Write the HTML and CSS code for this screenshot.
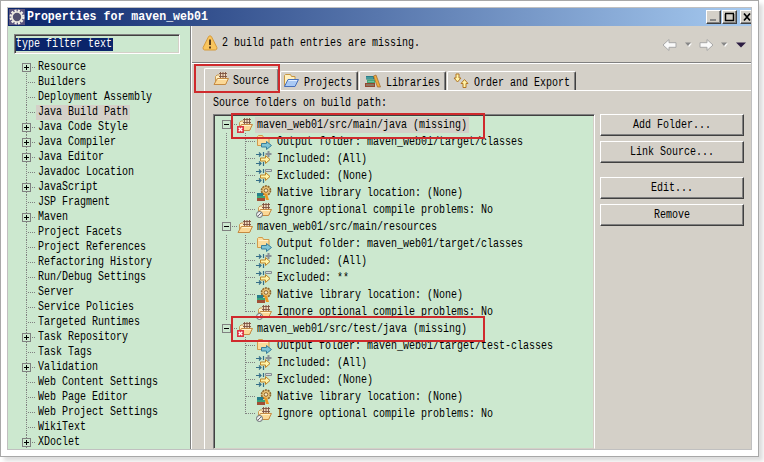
FILE: index.html
```html
<!DOCTYPE html>
<html lang="en">
<head>
<meta charset="utf-8">
<title>Properties for maven_web01</title>
<link rel="stylesheet" href="styles.css">
</head>
<body>
<svg class="defs" aria-hidden="true">
  <symbol id="pkg" viewBox="0 0 16 16">
    <path d="M2.500 13V5.500L4 4h3l1 1.500h5V13z" fill="#fff0c4" stroke="#c99a55"/>
    <path d="M6.500 1.500h7v6h-7z" fill="#f3dcc0"/>
    <path d="M7.500 1v7M10 1v7M12.500 1v7M6 2.500h8M6 5.500h8" fill="none" stroke="#7d5140" stroke-width=".9"/>
    <path d="M1 13.500L4.300 7.500h11.200L12.500 13.500z" fill="#fbd896" stroke="#c58a42"/>
    <path d="M5 8.500h9" stroke="#fff3cc"/>
  </symbol>
  <symbol id="missing" viewBox="0 0 16 16">
    <use href="#pkg"/>
    <path d="M0 9h7v7H0z" fill="#dc3542"/>
    <path d="M1.700 10.700l3.600 3.600M5.300 10.700l-3.600 3.600" stroke="#fff" stroke-width="1.300"/>
  </symbol>
  <symbol id="output" viewBox="0 0 16 16">
    <path d="M1.500 11.500V2.500L2.500 1.500h4l1 2h5.500v8z" fill="#fbdc9c" stroke="#d09a4a"/>
    <path d="M2.500 4.500h9.500" stroke="#fff2cc"/>
    <path d="M5.500 9.500h5v-2l5 4-5 4v-2.500h-5z" fill="#80c4d5" stroke="#397f9b"/>
  </symbol>
  <symbol id="filter" viewBox="0 0 16 16">
    <path d="M0 3.500h5M3 1.500l2 2-2 2M0 12.500h5M3 10.500l2 2-2 2M7.500 1v4M7.500 11v4" fill="none" stroke="#356e88" stroke-width="1.200"/>
    <path d="M4.500 7h5V4.500l4.500 4-4.500 4V10h-5z" fill="#fff4a8" stroke="#bd8427"/>
  </symbol>
  <symbol id="included" viewBox="0 0 16 16">
    <use href="#filter"/><path d="M12.500 0v6M9.500 3h6" stroke="#889096" stroke-width="2"/>
  </symbol>
  <symbol id="excluded" viewBox="0 0 16 16">
    <use href="#filter"/><path d="M9.500 1.500h6v2h-6z" fill="#d7dad9" stroke="#858b91"/>
  </symbol>
  <symbol id="native" viewBox="0 0 16 16">
    <circle cx="10" cy="5.500" r="4.500" fill="#e8c276" stroke="#8e652c" stroke-width="1.600" stroke-dasharray="2 .8"/>
    <circle cx="10" cy="5.500" r="1.800" fill="#f8edcb" stroke="#8e652c"/>
    <path d="M1 8h6v3H1z" fill="#267e8b"/><path d="M1 11h8v2H1z" fill="#3ca378"/><path d="M1 13h8v3H1z" fill="#a04f35"/>
    <path d="M8 8l3 1 2 6h-3z" fill="#ec9821"/>
  </symbol>
  <symbol id="ignore" viewBox="0 0 16 16">
    <use href="#pkg"/>
    <circle cx="3.500" cy="12.500" r="3" fill="#eee" stroke="#666d72"/><path d="M1.700 14.300l3.600-3.600" stroke="#666d72"/>
  </symbol>
  <symbol id="projects" viewBox="0 0 16 16">
    <path d="M1.500 13V2.500L2.500 1.500h5l1 2H12V12z" fill="#fff0bf" stroke="#c79643"/>
    <path d="M1.500 13.500L5 6.500h10.500L12 13.500z" fill="#a9c9f4" stroke="#476fba"/>
    <path d="M5.500 7.500h8.500" stroke="#e3efff"/>
  </symbol>
  <symbol id="libraries" viewBox="0 0 16 16">
    <path d="M1 3h8v3.500H1z" fill="#267e8b"/><path d="M2 6.500h8V10H2z" fill="#46a777"/><path d="M0 10h10v4H0z" fill="#93482f"/>
    <path d="M1 5h7M3 8.500h6M1 12h8" stroke="#83cbb8" stroke-width=".7"/>
    <path d="M8.500 3l2.500-1 4.500 12h-3z" fill="#efad3c" stroke="#9f6125" stroke-width=".7"/>
  </symbol>
  <symbol id="order" viewBox="0 0 16 16">
    <path d="M3 1h3v4h2L4.500 9 1 5h2z" fill="#fff4a8" stroke="#b27725"/>
    <path d="M10 14.500h3v-4h2l-3.500-4-3.500 4h2z" fill="#fff4a8" stroke="#b27725"/>
  </symbol>
  <symbol id="arrow" viewBox="0 0 16 14">
    <path d="M1 7l6-5.500v3.200h7v4.600H7v3.200z" fill="#fafafa" stroke="#a8a8a8"/>
  </symbol>
</svg>

<div class="frame">
  <div class="window">
    <header class="titlebar">
      <svg class="gear" viewBox="0 0 16 16"><path d="M0 0h16v16H0z" fill="#57527d"/><circle cx="8" cy="8" r="6.300" fill="none" stroke="#f3f1e9" stroke-width="2.500" stroke-dasharray="2.100 1.200"/><circle cx="8" cy="8" r="5" fill="#51506f" stroke="#e9e6dd" stroke-width="1.700"/></svg>
      <b class="title"><span class="t">Properties for maven_web01</span></b>
      <div class="controls">
        <i><svg viewBox="0 0 13 12"><path d="M3 9h6" stroke="#888" stroke-width="2"/></svg></i>
        <i><svg viewBox="0 0 13 12"><path d="M2.500 3v6.500h8V3M2 2.500h9" fill="none" stroke="#000" stroke-width="1.500"/></svg></i>
        <i class="close"><svg viewBox="0 0 13 12"><path d="M3 2.500l6 7M9 2.500l-6 7" stroke="#000" stroke-width="1.700"/></svg></i>
      </div>
    </header>
    <div class="body">
      <aside>
        <div class="search"><span class="sel"><span class="t">type filter text</span></span></div>
        <ul class="nav">
          <li class="plus"><span><span class="t">Resource</span></span></li>
          <li><span><span class="t">Builders</span></span></li>
          <li><span><span class="t">Deployment Assembly</span></span></li>
          <li class="current"><span><span class="t">Java Build Path</span></span></li>
          <li class="plus"><span><span class="t">Java Code Style</span></span></li>
          <li class="plus"><span><span class="t">Java Compiler</span></span></li>
          <li class="plus"><span><span class="t">Java Editor</span></span></li>
          <li><span><span class="t">Javadoc Location</span></span></li>
          <li class="plus"><span><span class="t">JavaScript</span></span></li>
          <li><span><span class="t">JSP Fragment</span></span></li>
          <li class="plus"><span><span class="t">Maven</span></span></li>
          <li><span><span class="t">Project Facets</span></span></li>
          <li><span><span class="t">Project References</span></span></li>
          <li><span><span class="t">Refactoring History</span></span></li>
          <li><span><span class="t">Run/Debug Settings</span></span></li>
          <li><span><span class="t">Server</span></span></li>
          <li><span><span class="t">Service Policies</span></span></li>
          <li><span><span class="t">Targeted Runtimes</span></span></li>
          <li class="plus"><span><span class="t">Task Repository</span></span></li>
          <li><span><span class="t">Task Tags</span></span></li>
          <li class="plus"><span><span class="t">Validation</span></span></li>
          <li><span><span class="t">Web Content Settings</span></span></li>
          <li><span><span class="t">Web Page Editor</span></span></li>
          <li><span><span class="t">Web Project Settings</span></span></li>
          <li><span><span class="t">WikiText</span></span></li>
          <li class="plus"><span><span class="t">XDoclet</span></span></li>
        </ul>
      </aside>
      <main>
        <div class="message">
          <svg class="warn" viewBox="0 0 16 16"><path d="M6.600 1.500q1.400-1.500 2.800 0l5.500 11q.6 2-1.500 2.500H2.600q-2-.5-1.500-2.500z" fill="#f9c55d" stroke="#d69a3a"/><path d="M8 4.500v5.500M8 11.500v2" stroke="#573817" stroke-width="1.900"/></svg>
          <span class="t">2 build path entries are missing.</span>
          <div class="history">
            <svg class="arr"><use href="#arrow"/></svg>
            <svg class="tri" viewBox="0 0 7 5"><path d="M1.500 1.500h5.500L4 5z" fill="#fff"/><path d="M0 .5h6L3 4z" fill="#888"/></svg>
            <svg class="arr next"><use href="#arrow"/></svg>
            <svg class="tri" viewBox="0 0 7 5"><path d="M1.500 1.500h5.500L4 5z" fill="#fff"/><path d="M0 .5h6L3 4z" fill="#888"/></svg>
            <svg class="menu" viewBox="0 0 10 6"><path d="M0 .5h10L5 5.500z" fill="#2c1c42"/></svg>
          </div>
        </div>
        <div class="tabs">
          <div class="tab active"><svg><use href="#pkg"/></svg><span class="t">Source</span></div>
          <div class="tab projects"><svg><use href="#projects"/></svg><span class="t">Projects</span></div>
          <div class="tab libraries"><svg><use href="#libraries"/></svg><span class="t">Libraries</span></div>
          <div class="tab order"><svg><use href="#order"/></svg><span class="t">Order and Export</span></div>
        </div>
        <div class="page">
          <div class="label"><span class="t">Source folders on build path:</span></div>
          <div class="content">
            <div class="tree">
              <div class="root picked"><svg><use href="#missing"/></svg><span><span class="t">maven_web01/src/main/java (missing)</span></span></div>
              <div class="kids">
                <div><svg><use href="#output"/></svg><span class="t">Output folder: maven_web01/target/classes</span></div>
                <div><svg><use href="#included"/></svg><span class="t">Included: (All)</span></div>
                <div><svg><use href="#excluded"/></svg><span class="t">Excluded: (None)</span></div>
                <div><svg><use href="#native"/></svg><span class="t">Native library location: (None)</span></div>
                <div><svg><use href="#ignore"/></svg><span class="t">Ignore optional compile problems: No</span></div>
              </div>
              <div class="root"><svg><use href="#pkg"/></svg><span><span class="t">maven_web01/src/main/resources</span></span></div>
              <div class="kids">
                <div><svg><use href="#output"/></svg><span class="t">Output folder: maven_web01/target/classes</span></div>
                <div><svg><use href="#included"/></svg><span class="t">Included: (All)</span></div>
                <div><svg><use href="#excluded"/></svg><span class="t">Excluded: **</span></div>
                <div><svg><use href="#native"/></svg><span class="t">Native library location: (None)</span></div>
                <div><svg><use href="#ignore"/></svg><span class="t">Ignore optional compile problems: No</span></div>
              </div>
              <div class="root"><svg><use href="#missing"/></svg><span><span class="t">maven_web01/src/test/java (missing)</span></span></div>
              <div class="kids last">
                <div><svg><use href="#output"/></svg><span class="t">Output folder: maven_web01/target/test-classes</span></div>
                <div><svg><use href="#included"/></svg><span class="t">Included: (All)</span></div>
                <div><svg><use href="#excluded"/></svg><span class="t">Excluded: (None)</span></div>
                <div><svg><use href="#native"/></svg><span class="t">Native library location: (None)</span></div>
                <div><svg><use href="#ignore"/></svg><span class="t">Ignore optional compile problems: No</span></div>
              </div>
            </div>
            <div class="buttons">
              <button><span class="t">Add Folder...</span></button>
              <button><span class="t">Link Source...</span></button>
              <button class="gap"><span class="t">Edit...</span></button>
              <button><span class="t">Remove</span></button>
            </div>
          </div>
        </div>
      </main>
    </div>
  </div>
</div>
<div class="mark mark-tab"></div>
<div class="mark mark-main"></div>
<div class="mark mark-test"></div>
</body>
</html>
```
FILE: styles.css
```css
*, *::before { box-sizing: border-box; }
html, body { margin: 0; height: 462px; overflow: hidden; background: #fff; }
body { position: relative; font: 10px/15px "Liberation Mono", monospace; color: #000; }
svg { display: block; flex: none; }
.defs { position: absolute; width: 0; height: 0; }
.t { display: inline-block; white-space: pre; transform: scaleY(1.2); }

.frame { width: 759px; height: 457px; border: 1px solid #a8a8a8; padding: 6px; background: #fff; box-shadow: 4px 4px 4px #ddd; }
.window { width: 745px; height: 443px; border: 1px solid #c0c0c0; overflow: hidden; background: #d4d0c8; }

.titlebar { display: flex; align-items: center; height: 18px; padding-left: 1px; background: linear-gradient(90deg, #0a246a, #a6caf0); overflow: hidden; }
.gear { width: 16px; height: 16px; }
.title { flex: 1; margin-left: 2px; color: #fff; font-size: 11.6px; line-height: 18px; }
.title .t { transform: scaleY(1.08); }
.controls { display: flex; width: 45px; overflow: hidden; }
.controls i { flex: none; width: 15px; height: 14px; margin-right: 1px; background: #d4d0c8; border: 1px solid; border-color: #fff #404040 #404040 #fff; box-shadow: inset -1px -1px #808080; }
.controls .close { margin-left: 2px; }
.controls svg { width: 13px; height: 12px; }

.body { display: flex; height: 423px; }
aside { width: 184px; flex: none; background: #cce8cf; border-right: 1px solid #fff; box-shadow: inset -1px 0 #808080; padding: 8px 0 0 6px; }
.search { display: flex; align-items: center; width: 166px; height: 20px; border: 1px solid; border-color: #808080 #fff #fff #808080; box-shadow: inset 1px 1px #404040, inset -1px -1px #d4d0c8; }
.sel { height: 13px; line-height: 14px; padding-right: 1px; margin-left: 1px; background: #0a246a; color: #fff; }

.nav { list-style: none; margin: 6px 0 0; padding: 0; }
.nav li { position: relative; height: 15px; padding-left: 22px; background: repeating-linear-gradient(180deg, #808080 0 1px, transparent 1px 2px) 12px 0 / 1px 15px no-repeat, repeating-linear-gradient(90deg, #808080 0 1px, transparent 1px 2px) 14px 7px / 7px 1px no-repeat; }
.nav li:first-child { background-position: 12px 7px, 14px 7px; }
.nav li > span { display: inline-block; height: 15px; padding: 0 2px; line-height: 16px; vertical-align: top; }
.nav .current > span { background: #d4d0c8; }
.plus::before, .root::before { content: ""; position: absolute; left: 8px; top: 3px; width: 9px; height: 9px; border: 1px solid #808080; background: linear-gradient(#000, #000) 1px 3px / 5px 1px no-repeat, linear-gradient(#000, #000) 3px 1px / 1px 5px no-repeat, #cce8cf; }

main { flex: 1; min-width: 0; }
.message { display: flex; align-items: center; height: 37px; padding: 0 5px 4px 10px; border-bottom: 1px solid #808080; box-shadow: 0 1px #fff; }
.warn { width: 16px; height: 16px; margin-right: 4px; margin-top: 2px; }
.history { display: flex; align-items: center; margin-left: auto; padding-top: 5px; }
.arr { width: 16px; height: 14px; }
.next { transform: scaleX(-1); }
.tri { width: 7px; height: 5px; margin: 0 6px 0 7px; }
.menu { width: 10px; height: 6px; margin-left: 2px; }

.tabs { display: flex; align-items: flex-end; height: 27px; padding-left: 12px; }
.tab { display: flex; align-items: center; height: 19px; margin-right: 1px; padding-left: 5px; border: 1px solid #fff; border-right: 1px solid #404040; border-bottom: 0; border-radius: 2px 2px 0 0; box-shadow: inset -1px 0 #808080; }
.tab svg { width: 16px; height: 16px; margin-right: 5px; }
.tab .t { padding-top: 3px; }
.active { width: 75px; height: 22px; padding-left: 8px; padding-bottom: 1px; }
.active svg { margin-right: 4px; }
.projects { width: 78px; padding-left: 2px; }
.libraries { width: 87px; }
.order { width: 129px; }

.page { margin-left: 12px; height: 359px; padding-left: 8px; border-left: 1px solid #fff; background: linear-gradient(#fff, #fff) 74px 0 / 474px 1px no-repeat; }
.label { height: 24px; padding-top: 5px; }
.content { display: flex; gap: 5px; }
.tree { width: 382px; height: 335px; background: #cce8cf; border: 1px solid; border-color: #808080 #fff #d4d0c8 #808080; box-shadow: inset 1px 1px #404040, inset -1px 0 #d4d0c8; padding: 1px; }
.root, .kids > div { position: relative; display: flex; align-items: center; height: 17px; }
.root { padding-left: 22px; background: repeating-linear-gradient(90deg, #808080 0 1px, transparent 1px 2px) 17px 8px / 6px 1px no-repeat; }
.root::before { left: 7px; top: 4px; background: linear-gradient(#000, #000) 1px 3px / 5px 1px no-repeat, #cce8cf; }
.root svg, .kids svg { width: 16px; height: 16px; }
.root > span { height: 16px; padding: 0 2px; margin-left: 2px; line-height: 15px; }
.picked > span { background: #d4d0c8; }
.kids { background: repeating-linear-gradient(180deg, #808080 0 1px, transparent 1px 2px) 11px 0 / 1px 100% no-repeat; }
.kids.last { background: none; }
.kids > div { padding-left: 41px; background: repeating-linear-gradient(180deg, #808080 0 1px, transparent 1px 2px) 30px 0 / 1px 17px no-repeat, repeating-linear-gradient(90deg, #808080 0 1px, transparent 1px 2px) 31px 8px / 10px 1px no-repeat; }
.kids > div:last-child { background-size: 1px 9px, 10px 1px; }
.kids .t { margin-left: 5px; }

.buttons { display: flex; flex-direction: column; gap: 5px; }
button { width: 144px; height: 22px; padding: 0 0 2px 0; border: 1px solid; border-color: #fff #404040 #404040 #fff; box-shadow: inset -1px -1px #808080; background: #d4d0c8; font: inherit; color: inherit; }
.gap { margin-top: 9px; }

.mark { position: absolute; border: 2px solid #cf2a2d; }
.mark-tab { left: 194px; top: 64px; width: 86px; height: 29px; }
.mark-main { left: 231px; top: 113px; width: 254px; height: 26px; }
.mark-test { left: 231px; top: 316px; width: 254px; height: 26px; }
```
